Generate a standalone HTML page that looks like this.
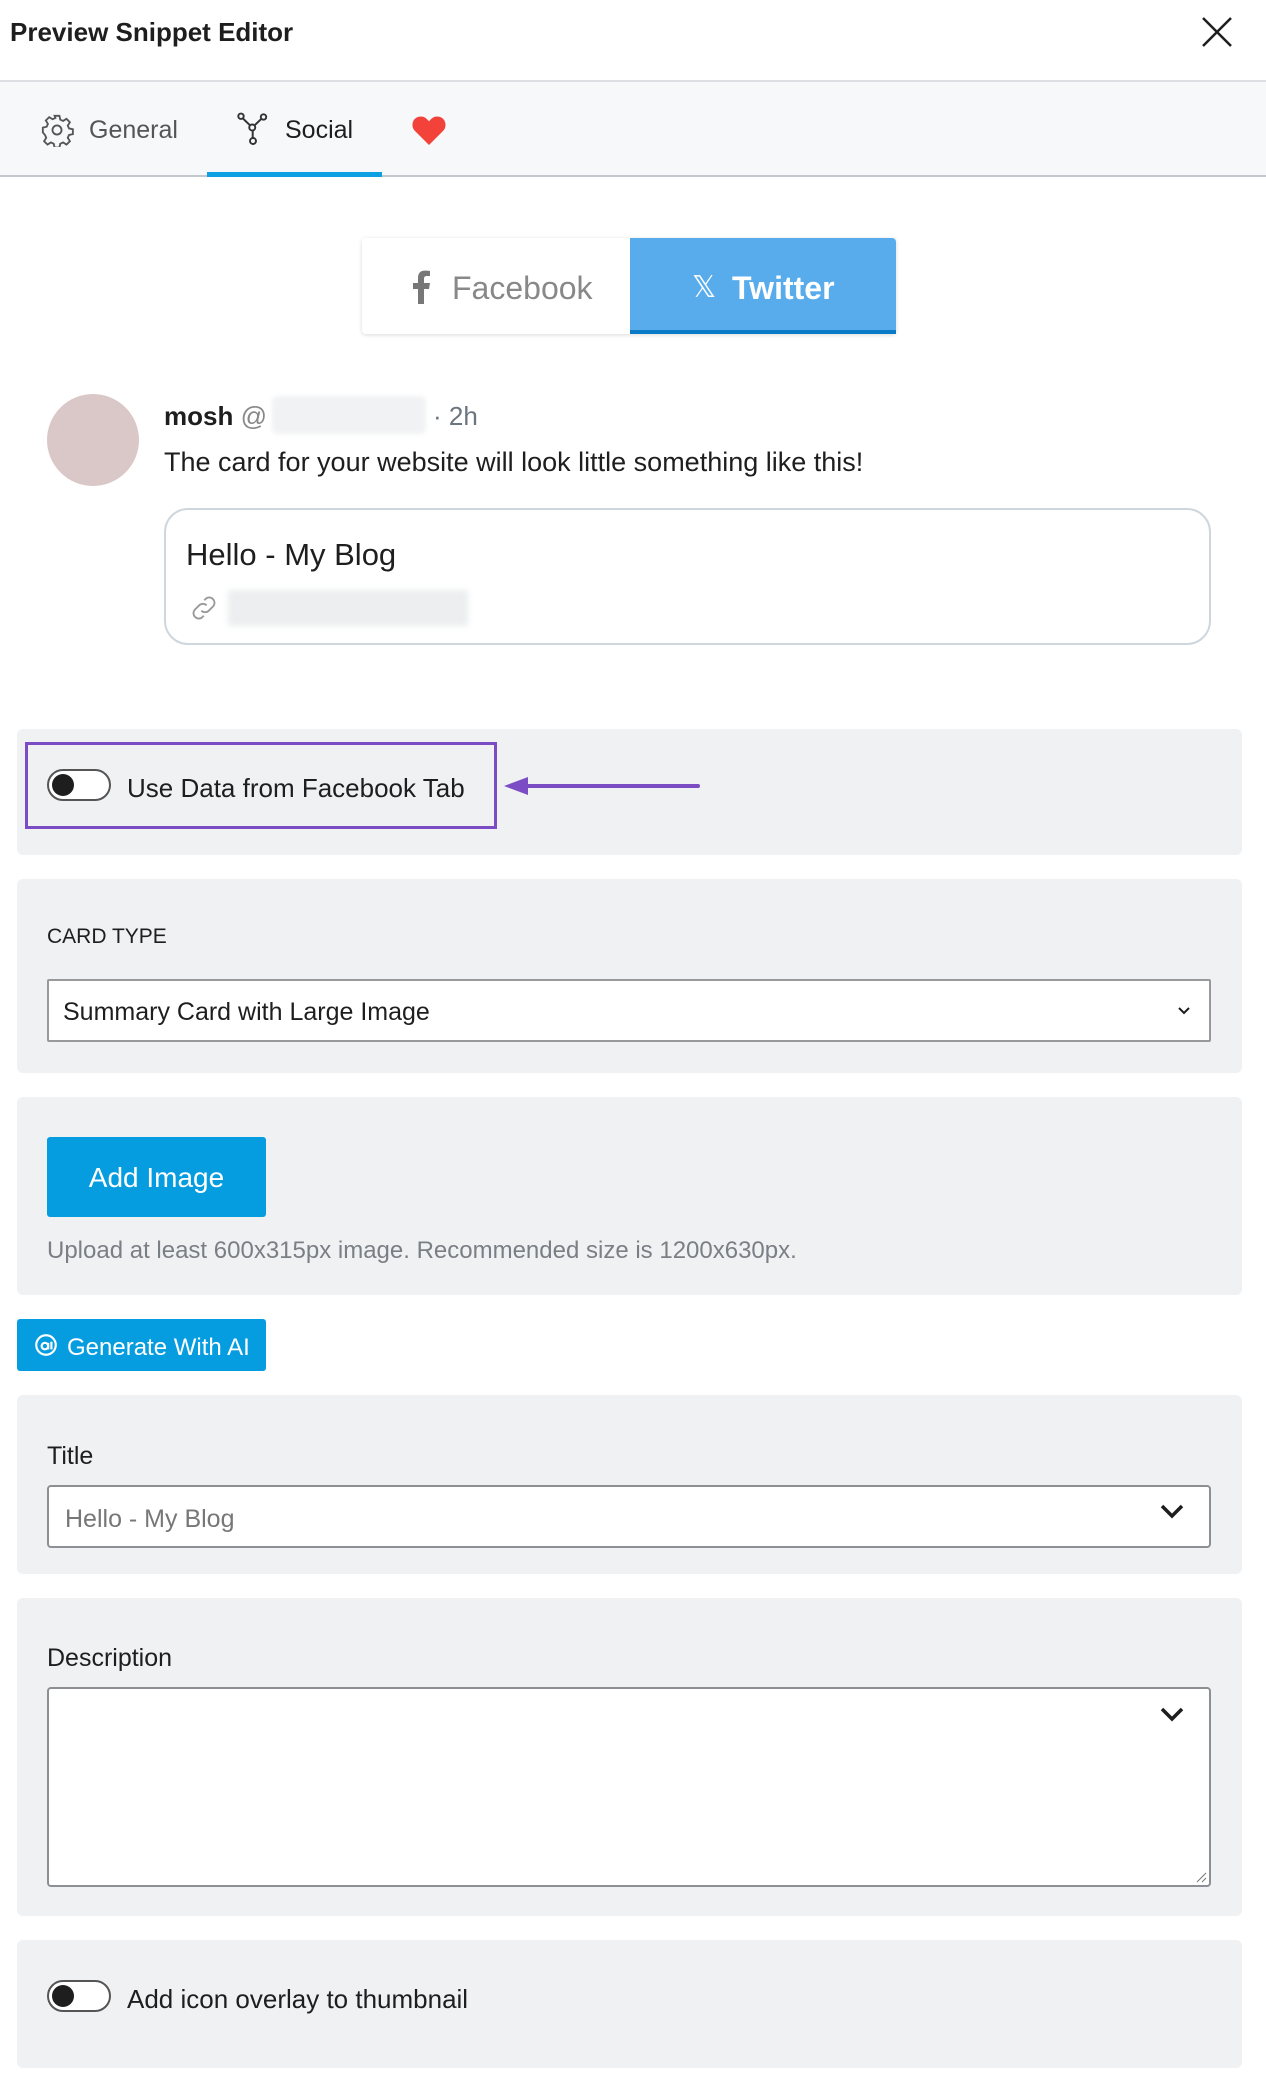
<!DOCTYPE html>
<html><head><meta charset="utf-8"><style>
*{box-sizing:border-box;margin:0;padding:0}
body{width:1266px;height:2090px;background:#fff;font-family:"Liberation Sans",sans-serif;color:#1f2328;position:relative;overflow:hidden}
.a{position:absolute}
.sec{position:absolute;left:17px;width:1225px;background:#f0f1f3;border-radius:6px}
.tog{position:absolute;width:64px;height:32px;border:2px solid #555;border-radius:16px;background:#fff}
.tog:after{content:"";position:absolute;left:3px;top:3px;width:22px;height:22px;border-radius:50%;background:#1e1e1e}
.inp{position:absolute;left:47px;width:1164px;background:#fff;border:2px solid #8c8f94;border-radius:4px}
</style></head><body>
<div class="a" style="left:10px;top:17px;font-size:26px;font-weight:bold;color:#1e1e1e">Preview Snippet Editor</div>
<svg class="a" style="left:1200px;top:15px" width="34" height="34" viewBox="0 0 34 34"><path d="M3 3L31 31M31 3L3 31" stroke="#1e1e1e" stroke-width="2.5"/></svg>
<div class="a" style="left:0;top:80px;width:1266px;height:97px;background:#f7f8f9;border-top:2px solid #dcdfe3;border-bottom:2px solid #c3c8cf"></div>
<svg class="a" style="left:40px;top:113px" width="34" height="34" viewBox="0 0 24 24" fill="none" stroke="#555" stroke-width="1.3"><circle cx="12" cy="12" r="3.2"/><path d="M10.3 2h3.4l.6 2.7 2 .9 2.4-1.5 2.4 2.4-1.5 2.4.9 2 2.7.6v3.4l-2.7.6-.9 2 1.5 2.4-2.4 2.4-2.4-1.5-2 .9-.6 2.7h-3.4l-.6-2.7-2-.9-2.4 1.5-2.4-2.4 1.5-2.4-.9-2L2 13.7v-3.4l2.7-.6.9-2-1.5-2.4 2.4-2.4 2.4 1.5 2-.9z"/></svg>
<div class="a" style="left:89px;top:116px;font-size:25px;color:#555">General</div>
<svg class="a" style="left:235px;top:111px" width="36" height="36" viewBox="0 0 24 24" fill="none" stroke="#333" stroke-width="1.3"><circle cx="4" cy="3.5" r="1.8"/><circle cx="19" cy="4" r="1.8"/><circle cx="12" cy="20" r="2"/><circle cx="11.5" cy="11" r="2"/><path d="M5.3 5l4.8 4.6M17.6 5.2l-4.6 4.4M11.8 13v5"/></svg>
<div class="a" style="left:285px;top:116px;font-size:25px;color:#1e1e1e">Social</div>
<svg class="a" style="left:411px;top:113px" width="36" height="34" viewBox="0 0 24 22"><path d="M12 21L2.5 11.5C-.5 8.5 1 2 6.5 2c2.7 0 4.3 1.7 5.5 3.3C13.2 3.7 14.8 2 17.5 2 23 2 24.5 8.5 21.5 11.5z" fill="#f2423a"/></svg>
<div class="a" style="left:207px;top:172px;width:175px;height:5px;background:#0ea0e3"></div>

<div class="a" style="left:362px;top:238px;width:534px;height:96px;border-radius:4px;box-shadow:0 1px 4px rgba(0,0,0,.15);background:#fff"></div>
<div class="a" style="left:630px;top:238px;width:266px;height:96px;background:#58acec;border-bottom:4px solid #0a7bc7;border-radius:0 4px 0 0"></div>
<svg class="a" style="left:412px;top:270px" width="18" height="34" viewBox="0 0 18 34"><path d="M12 34V19h5l1-6h-6V9c0-2 .7-3 3-3h3V1c-1-.2-3-.4-5-.4-5 0-7 3-7 7.4v5H1v6h5v15z" fill="#777"/></svg>
<div class="a" style="left:452px;top:270px;font-size:32px;color:#888">Facebook</div>
<div class="a" style="left:692px;top:270px;font-size:30px;color:#fff">𝕏</div>
<div class="a" style="left:732px;top:270px;font-size:32px;font-weight:bold;color:#fff">Twitter</div>

<div class="a" style="left:47px;top:394px;width:92px;height:92px;border-radius:50%;background:#dac8c8"></div>
<div class="a" style="left:164px;top:401px;font-size:26px;color:#1e1e1e"><b>mosh</b> <span style="color:#888">@</span></div>
<div class="a" style="left:272px;top:396px;width:154px;height:38px;background:#f1f2f4;border-radius:6px;filter:blur(2px)"></div>
<div class="a" style="left:433px;top:401px;font-size:26px;color:#6b7580">· 2h</div>
<div class="a" style="left:164px;top:447px;font-size:27px;color:#1e1e1e">The card for your website will look little something like this!</div>
<div class="a" style="left:164px;top:508px;width:1047px;height:137px;border:2px solid #cfd6dc;border-radius:24px"></div>
<div class="a" style="left:186px;top:537px;font-size:31px;color:#1e1e1e">Hello - My Blog</div>
<svg class="a" style="left:188px;top:590px" width="32" height="36" viewBox="0 0 24 24" fill="none" stroke="#999" stroke-width="1.4"><path d="M10 14a4 4 0 0 0 5.6 0l3.5-3.5a4 4 0 0 0-5.6-5.6l-1.3 1.3M14 10a4 4 0 0 0-5.6 0l-3.5 3.5a4 4 0 0 0 5.6 5.6l1.3-1.3"/></svg>
<div class="a" style="left:228px;top:590px;width:240px;height:36px;background:#eceef0;filter:blur(3px)"></div>

<div class="sec" style="top:729px;height:126px"></div>
<div class="a" style="left:25px;top:742px;width:472px;height:87px;border:3px solid #7b4cc4"></div>
<div class="tog" style="left:47px;top:769px"></div>
<div class="a" style="left:127px;top:773px;font-size:26px;color:#1e1e1e">Use Data from Facebook Tab</div>
<svg class="a" style="left:502px;top:774px" width="200" height="24" viewBox="0 0 200 24"><path d="M22 12H196" stroke="#7b4cc4" stroke-width="4" stroke-linecap="round"/><path d="M2 12L26 3V21z" fill="#7b4cc4"/></svg>

<div class="sec" style="top:879px;height:194px"></div>
<div class="a" style="left:47px;top:925px;font-size:21px;color:#1e1e1e">CARD TYPE</div>
<div class="inp" style="top:979px;height:63px;border-color:#999;border-radius:2px"></div>
<div class="a" style="left:63px;top:998px;font-size:25px;color:#1e1e1e">Summary Card with Large Image</div>
<svg class="a" style="left:1176px;top:1005px" width="16" height="12" viewBox="0 0 16 12"><path d="M3 3l5 5 5-5" stroke="#1e1e1e" stroke-width="2" fill="none"/></svg>

<div class="sec" style="top:1097px;height:198px"></div>
<div class="a" style="left:47px;top:1137px;width:219px;height:80px;background:#069de0;border-radius:3px;color:#fff;font-size:28px;text-align:center;line-height:82px">Add Image</div>
<div class="a" style="left:47px;top:1237px;font-size:24px;color:#7a7f85">Upload at least 600x315px image. Recommended size is 1200x630px.</div>

<div class="a" style="left:17px;top:1319px;width:249px;height:52px;background:#069de0;border-radius:3px"></div>
<svg class="a" style="left:33px;top:1332px" width="26" height="26" viewBox="0 0 24 24" fill="none" stroke="#fff" stroke-width="2"><circle cx="12" cy="12" r="9"/><circle cx="11" cy="13" r="3"/><path d="M14 10v6M17 9v7"/></svg>
<div class="a" style="left:67px;top:1334px;font-size:24px;color:#fff">Generate With AI</div>

<div class="sec" style="top:1395px;height:179px"></div>
<div class="a" style="left:47px;top:1442px;font-size:25px;color:#1e1e1e">Title</div>
<div class="inp" style="top:1485px;height:63px"></div>
<div class="a" style="left:65px;top:1505px;font-size:25px;color:#777">Hello - My Blog</div>
<svg class="a" style="left:1159px;top:1502px" width="26" height="20" viewBox="0 0 26 20"><path d="M3 4l10 10L23 4" stroke="#1e1e1e" stroke-width="3.5" fill="none"/></svg>

<div class="sec" style="top:1598px;height:318px"></div>
<div class="a" style="left:47px;top:1644px;font-size:25px;color:#1e1e1e">Description</div>
<div class="inp" style="top:1687px;height:200px"></div>
<svg class="a" style="left:1159px;top:1705px" width="26" height="20" viewBox="0 0 26 20"><path d="M3 4l10 10L23 4" stroke="#1e1e1e" stroke-width="3.5" fill="none"/></svg>
<svg class="a" style="left:1195px;top:1871px" width="12" height="12" viewBox="0 0 12 12"><path d="M11 2L2 11M11 7L7 11" stroke="#777" stroke-width="1"/></svg>

<div class="sec" style="top:1940px;height:128px"></div>
<div class="tog" style="left:47px;top:1980px"></div>
<div class="a" style="left:127px;top:1984px;font-size:26px;color:#1e1e1e">Add icon overlay to thumbnail</div>
</body></html>
